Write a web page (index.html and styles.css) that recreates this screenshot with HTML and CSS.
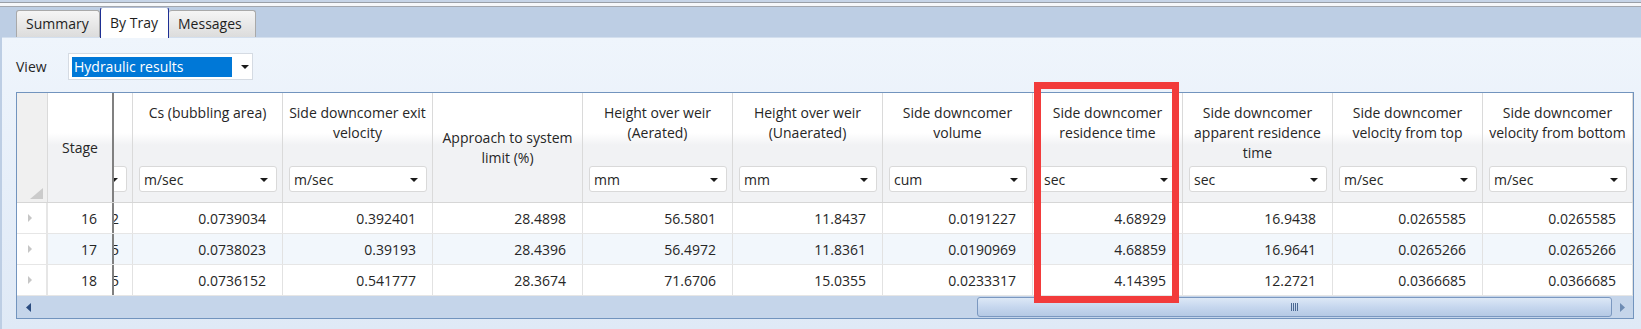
FILE: index.html
```html
<!DOCTYPE html>
<html>
<head>
<meta charset="utf-8">
<title>By Tray</title>
<link rel="stylesheet" href="styles.css">
</head>
<body>
<div class="chrome-top"></div>
<div class="chrome-top2"></div>
<div class="tabs">
  <div class="tab tab-summary">Summary</div>
  <div class="tab tab-active tab-bytray">By Tray</div>
  <div class="tab tab-messages">Messages</div>
</div>
<div class="panel">
  <div class="view-row">
    <span class="view-label">View</span>
    <div class="view-select"><span class="view-value">Hydraulic results</span><span class="caret"></span></div>
  </div>
  <div class="grid">
    <div class="row head">
      <div class="cell rh corner"><svg class="corner-tri" width="13" height="11" viewBox="0 0 13 11"><polygon points="13,0 13,11 0,11" fill="#cbcbcb"/></svg></div>
      <div class="cell stage hcenter">Stage</div>
      <div class="frozen"></div>
      <div class="cell partial"><div class="partial-inner hcol"><div class="unit unit-end"><span class="caret"></span></div></div></div>
      <div class="cell col hcol"><div class="htitle">Cs (bubbling area)</div><div class="unit"><span>m/sec</span><span class="caret"></span></div></div>
      <div class="cell col hcol"><div class="htitle">Side downcomer exit<br>velocity</div><div class="unit"><span>m/sec</span><span class="caret"></span></div></div>
      <div class="cell col hcenter">Approach to system<br>limit (%)</div>
      <div class="cell col hcol"><div class="htitle">Height over weir<br>(Aerated)</div><div class="unit"><span>mm</span><span class="caret"></span></div></div>
      <div class="cell col hcol"><div class="htitle">Height over weir<br>(Unaerated)</div><div class="unit"><span>mm</span><span class="caret"></span></div></div>
      <div class="cell col hcol"><div class="htitle">Side downcomer<br>volume</div><div class="unit"><span>cum</span><span class="caret"></span></div></div>
      <div class="cell col hcol"><div class="htitle">Side downcomer<br>residence time</div><div class="unit"><span>sec</span><span class="caret"></span></div></div>
      <div class="cell col hcol"><div class="htitle">Side downcomer<br>apparent residence<br>time</div><div class="unit"><span>sec</span><span class="caret"></span></div></div>
      <div class="cell col hcol"><div class="htitle">Side downcomer<br>velocity from top</div><div class="unit"><span>m/sec</span><span class="caret"></span></div></div>
      <div class="cell col hcol"><div class="htitle">Side downcomer<br>velocity from bottom</div><div class="unit"><span>m/sec</span><span class="caret"></span></div></div>
    </div>

    <div class="row drow">
      <div class="cell rh"><span class="row-tri"></span></div>
      <div class="cell stage num">16</div>
      <div class="frozen"></div>
      <div class="cell partial"><div class="partial-inner num">2</div></div>
      <div class="cell col num">0.0739034</div>
      <div class="cell col num">0.392401</div>
      <div class="cell col num">28.4898</div>
      <div class="cell col num">56.5801</div>
      <div class="cell col num">11.8437</div>
      <div class="cell col num">0.0191227</div>
      <div class="cell col num">4.68929</div>
      <div class="cell col num">16.9438</div>
      <div class="cell col num">0.0265585</div>
      <div class="cell col num">0.0265585</div>
    </div>
    <div class="row drow alt">
      <div class="cell rh"><span class="row-tri"></span></div>
      <div class="cell stage num">17</div>
      <div class="frozen"></div>
      <div class="cell partial"><div class="partial-inner num">5</div></div>
      <div class="cell col num">0.0738023</div>
      <div class="cell col num">0.39193</div>
      <div class="cell col num">28.4396</div>
      <div class="cell col num">56.4972</div>
      <div class="cell col num">11.8361</div>
      <div class="cell col num">0.0190969</div>
      <div class="cell col num">4.68859</div>
      <div class="cell col num">16.9641</div>
      <div class="cell col num">0.0265266</div>
      <div class="cell col num">0.0265266</div>
    </div>
    <div class="row drow">
      <div class="cell rh"><span class="row-tri"></span></div>
      <div class="cell stage num">18</div>
      <div class="frozen"></div>
      <div class="cell partial"><div class="partial-inner num">5</div></div>
      <div class="cell col num">0.0736152</div>
      <div class="cell col num">0.541777</div>
      <div class="cell col num">28.3674</div>
      <div class="cell col num">71.6706</div>
      <div class="cell col num">15.0355</div>
      <div class="cell col num">0.0233317</div>
      <div class="cell col num">4.14395</div>
      <div class="cell col num">12.2721</div>
      <div class="cell col num">0.0366685</div>
      <div class="cell col num">0.0366685</div>
    </div>

    <div class="hscroll">
      <div class="sb-btn"><svg width="5" height="9" viewBox="0 0 5 9"><polygon points="5,0 5,9 0,4.5" fill="#2b4c80"/></svg></div>
      <div class="sb-space"></div>
      <div class="sb-thumb"><svg width="8" height="8" viewBox="0 0 8 8"><g fill="#4a6892"><rect x="0" y="0" width="1" height="8"/><rect x="2" y="0" width="1" height="8"/><rect x="4" y="0" width="1" height="8"/><rect x="6" y="0" width="1" height="8"/></g></svg></div>
      <div class="sb-btn sb-right"><svg width="5" height="9" viewBox="0 0 5 9"><polygon points="0,0 0,9 5,4.5" fill="#6d8bb3"/></svg></div>
    </div>
  </div>
</div>
<div class="highlight"></div>
</body>
</html>
```

FILE: styles.css
```css
* { box-sizing: border-box; }
html, body { margin: 0; padding: 0; }
body {
  position: relative;
  width: 1641px;
  height: 329px;
  overflow: hidden;
  background: #bdcee4;
  font-family: "Open Sans", "Noto Sans", sans-serif;
  font-size: 14px;
  color: #262626;
}
.chrome-top { height: 3px; background: #c6d4e7; border-bottom: 1px solid #9a9fa7; }
.chrome-top2 { height: 4px; background: #f5f7fa; border-bottom: 1px solid #a3a7ae; }

.tabs {
  height: 30px;
  display: flex;
  align-items: flex-end;
  padding-left: 16px;
}
.tab {
  height: 27px;
  padding-left: 9px;
  line-height: 25px;
  border: 1px solid #a9a9a9;
  border-bottom: none;
  border-radius: 3px 3px 0 0;
  background: linear-gradient(#f5f5f5, #dcdcdc);
  color: #1e1e1e;
  white-space: nowrap;
}
.tab-summary { width: 84px; }
.tab-bytray {
  width: 69px;
  height: 31px;
  margin-bottom: -1px;
  background: #fff;
  border-color: #1e2f94;
  border-top-color: #b3c0d8;
  line-height: 29px;
  position: relative;
  z-index: 1;
}
.tab-messages { width: 87px; border-left: none; }

.panel {
  height: 292px;
  margin-left: 2px;
  border-top: 1px solid #d3dfee;
  background: linear-gradient(#eff5fc, #dfe9f6);
  padding: 15px 7px 0 14px;
}
.view-row { display: flex; align-items: center; height: 27px; }
.view-label { width: 52px; }
.view-select {
  width: 185px;
  height: 27px;
  border: 1px solid #d5dbe3;
  background: #fff;
  display: flex;
  align-items: center;
  padding-left: 3px;
}
.view-value {
  width: 160px;
  height: 20px;
  line-height: 20px;
  background: #0078d7;
  color: #fff;
  padding-left: 2px;
}
.view-select .caret { margin-left: 9px; }
.caret {
  width: 0;
  height: 0;
  border-left: 4px solid transparent;
  border-right: 4px solid transparent;
  border-top: 4px solid #1a1a1a;
}

.grid {
  margin-top: 12px;
  width: 1618px;
  height: 227px;
  border: 1px solid #7294be;
  background: #fff;
}
.row { display: flex; }
.head {
  height: 110px;
  border-bottom: 1px solid #d6d6d6;
  background: linear-gradient(#fff 0, #fff 40px, #f1f2f4 52px, #f1f2f4 100%);
}
.drow { height: 31px; border-bottom: 1px solid #e6e6e6; }
.drow.alt { background: #f2f7fc; }
.cell { flex: none; border-right: 1px solid #e2e2e2; }
.head .cell { border-right-color: #dadada; }
.rh { width: 31px; background: #fff; }
.head .rh { background: #f0f0f0; position: relative; }
.corner-tri { position: absolute; right: 4px; bottom: 3px; }
.drow .rh { display: flex; align-items: center; padding-left: 11px; border-right: 2px solid #e6e6e6; }
.row-tri {
  width: 0;
  height: 0;
  border-top: 4px solid transparent;
  border-bottom: 4px solid transparent;
  border-left: 4px solid #c6c6c6;
}
.stage { width: 64px; border-right: none; }
.frozen { flex: none; width: 2px; background: #808080; }
.partial { width: 19px; overflow: hidden; }
.partial-inner { width: 150px; margin-left: -132px; height: 100%; }
.col { width: 150px; }

.hcol { display: flex; flex-direction: column; height: 100%; }
.htitle {
  padding-top: 10px;
  line-height: 20px;
  text-align: center;
  white-space: nowrap;
}
.hcenter {
  display: flex;
  align-items: center;
  justify-content: center;
  text-align: center;
  line-height: 20px;
  white-space: nowrap;
}
.unit {
  margin: auto 5px 10px 6px;
  height: 26px;
  border: 1px solid #d9d9d9;
  border-radius: 3px;
  background: #fff;
  display: flex;
  align-items: center;
  justify-content: space-between;
  padding: 1px 8px 0 4px;
}
.unit-end { justify-content: flex-end; }

.num {
  text-align: right;
  padding-right: 16px;
  line-height: 31px;
  white-space: nowrap;
}
.stage.num { padding-right: 15px; }
.partial-inner.num { padding-right: 13px; }

.hscroll {
  height: 22px;
  background: #c5d5ea;
  display: flex;
  align-items: center;
}
.sb-btn {
  flex: none;
  width: 22px;
  height: 100%;
  display: flex;
  align-items: center;
  justify-content: center;
}
.sb-right { width: 21px; }
.sb-space { flex: 1; }
.sb-thumb {
  flex: none;
  width: 635px;
  height: 20px;
  border: 1px solid #7b98c0;
  border-radius: 3px;
  background: linear-gradient(#dde8f6, #c6d7ee 50%, #b5c9e4);
  display: flex;
  align-items: center;
  justify-content: center;
}

.highlight {
  position: absolute;
  left: 1034px;
  top: 82px;
  width: 145px;
  height: 221px;
  border: 7px solid #f23b3b;
  pointer-events: none;
}
```
